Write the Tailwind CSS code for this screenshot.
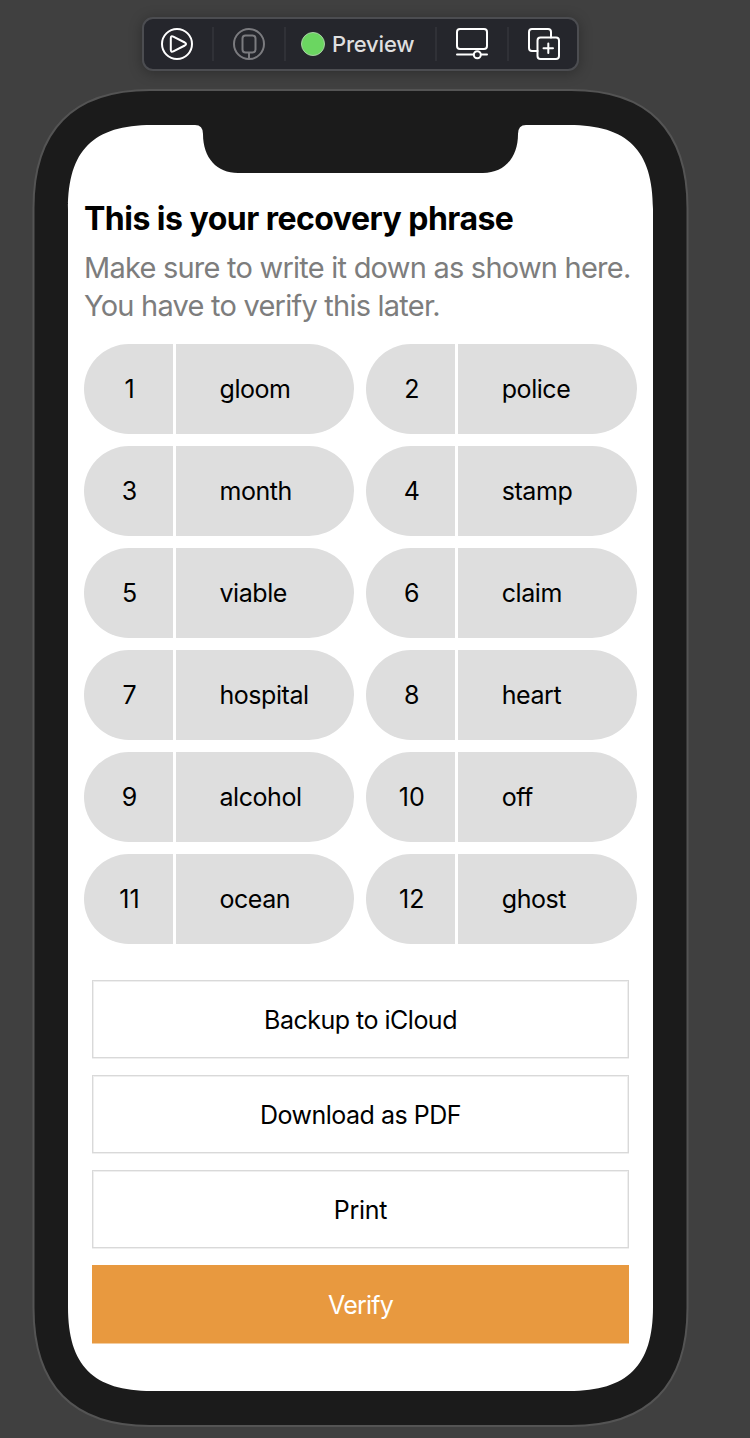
<!DOCTYPE html>
<html lang="en">
<head>
<meta charset="utf-8">
<title>Preview</title>
<script src="https://cdn.jsdelivr.net/npm/@tailwindcss/browser@4"></script>
</head>
<body class="bg-[#404040] font-['Inter','Liberation_Sans',sans-serif] text-black">
<div class="relative flex h-[1438px] w-[750px] flex-col overflow-hidden pt-[17px]">
  <!-- Device frame -->
  <svg class="absolute inset-0" width="750" height="1438" viewBox="0 0 750 1438" fill="none">
    <path d="M150 90H571C648 90 687.500 130 687.500 208V1308C687.500 1386 648 1426 571 1426H150C73 1426 33.500 1386 33.500 1308V208C33.500 130 73 90 150 90Z" fill="#1b1b1b" stroke="#545454" stroke-width="2"/>
    <path d="M152 125H195Q203 125 203 134C203 158 217 173 238 173H483C504 173 518 158 518 134Q518 125 526 125H569C627.700 125 653 150.300 653 209V1307C653 1365.700 627.700 1391 569 1391H152C93.300 1391 68 1365.700 68 1307V209C68 150.300 93.300 125 152 125Z" fill="#fff"/>
  </svg>

  <!-- Canvas toolbar -->
  <div class="relative ml-[142px] flex h-[54px] w-[437px] items-center rounded-[11px] border-2 border-[#4c4d51] bg-[#25262c] px-[17px] shadow-[0_2px_14px_rgba(0,0,0,0.3)]">
    <svg width="32" height="32" viewBox="0 0 32 32" fill="none" stroke="#fff" stroke-width="2" stroke-linejoin="round"><circle cx="16" cy="16" r="15"/><path d="M9.800 10.200Q9.800 7.500 12.300 8.700L23.800 14.500Q26.300 16 23.800 17.500L12.300 23.300Q9.800 24.500 9.800 21.800Z"/></svg>
    <div class="mx-[19px] h-[34px] w-[2px] bg-[#303137]"></div>
    <svg width="32" height="32" viewBox="0 0 32 32" fill="none" stroke="#7b7b7f" stroke-width="2"><circle cx="16" cy="16" r="15"/><rect x="9.500" y="7.500" width="13" height="17" rx="3"/><path d="M16 24.500V31"/></svg>
    <div class="ml-[19px] mr-[15px] h-[34px] w-[2px] bg-[#303137]"></div>
    <div class="size-6 rounded-full border border-[#a9cfa5] bg-[#6bd661]"></div>
    <div class="ml-[7px] w-[103px] whitespace-nowrap text-[22px] font-medium leading-[34px] tracking-[-0.2px] text-[#dfdfdf]"><span>Preview</span></div>
    <div class="mr-[19px] h-[34px] w-[2px] bg-[#303137]"></div>
    <svg width="32" height="32" viewBox="0 0 32 32" fill="none" stroke="#fff" stroke-width="2" stroke-linecap="round"><rect x="1" y="1" width="30" height="20" rx="3"/><path d="M1 26.500H17.500M25 26.500H31"/><circle cx="21.300" cy="26.700" r="3.500"/></svg>
    <div class="mx-[19px] h-[34px] w-[2px] bg-[#303137]"></div>
    <svg width="32" height="32" viewBox="0 0 32 32" fill="none" stroke="#fff" stroke-width="2" stroke-linecap="round"><path d="M9.500 23H4Q1 23 1 20V4Q1 1 4 1H20Q23 1 23 4V9.500"/><rect x="9.500" y="9.500" width="21.500" height="21.500" rx="3"/><path d="M15.500 20.300H25M20.300 15.500V25"/></svg>
  </div>

  <!-- Screen content -->
  <main class="relative ml-[84px] mt-[126px] w-[553px]">
    <h1 class="h-[43px] whitespace-nowrap text-[32px] font-bold leading-[43px] tracking-[-0.52px]"><span>This is your recovery phrase</span></h1>
    <p class="mt-[9px] h-[76px] whitespace-nowrap text-[29px] leading-[38px] tracking-[-0.77px] text-[#7d7d7d]"><span>Make sure to write it down as shown here.</span><br><span>You have to verify this later.</span></p>

    <div class="mt-[19px] grid w-[552.5px] grid-cols-2 gap-3 text-[25px] leading-[91px] tracking-[-0.45px]" id="words"></div>

    <div class="mx-2 mt-9 flex flex-col gap-[17px] text-center text-[25px] leading-[80px] tracking-[-0.5px]">
      <button class="h-[78px] shadow-[inset_0_0_0_1px_#d9d9d9,inset_1px_1px_0_1px_#efefef,inset_-1px_0_0_1px_#efefef,0_1px_0_#efefef]"><span>Backup to iCloud</span></button>
      <button class="h-[78px] shadow-[inset_0_0_0_1px_#d9d9d9,inset_1px_1px_0_1px_#efefef,inset_-1px_0_0_1px_#efefef,0_1px_0_#efefef]"><span>Download as PDF</span></button>
      <button class="h-[78px] tracking-[-0.3px] shadow-[inset_0_0_0_1px_#d9d9d9,inset_1px_1px_0_1px_#efefef,inset_-1px_0_0_1px_#efefef,0_1px_0_#efefef]"><span>Print</span></button>
      <button class="h-[78px] bg-[#e8993f] tracking-[-0.8px] text-white shadow-[0_1px_0_#f3cc9f]"><span>Verify</span></button>
    </div>
  </main>
</div>
<script>
const words = ["gloom","police","month","stamp","viable","claim","hospital","heart","alcohol","off","ocean","ghost"];
document.getElementById("words").innerHTML = words.map((w, i) => `
  <div class="flex h-[90px] overflow-hidden rounded-full bg-[#dedede]">
    <div class="w-[89px] pl-[2px] text-center tracking-normal">${i + 1}</div>
    <div class="w-[3px] bg-white"></div>
    <div class="pl-[43.5px]"><span>${w}</span></div>
  </div>`).join("");
</script>
</body>
</html>
